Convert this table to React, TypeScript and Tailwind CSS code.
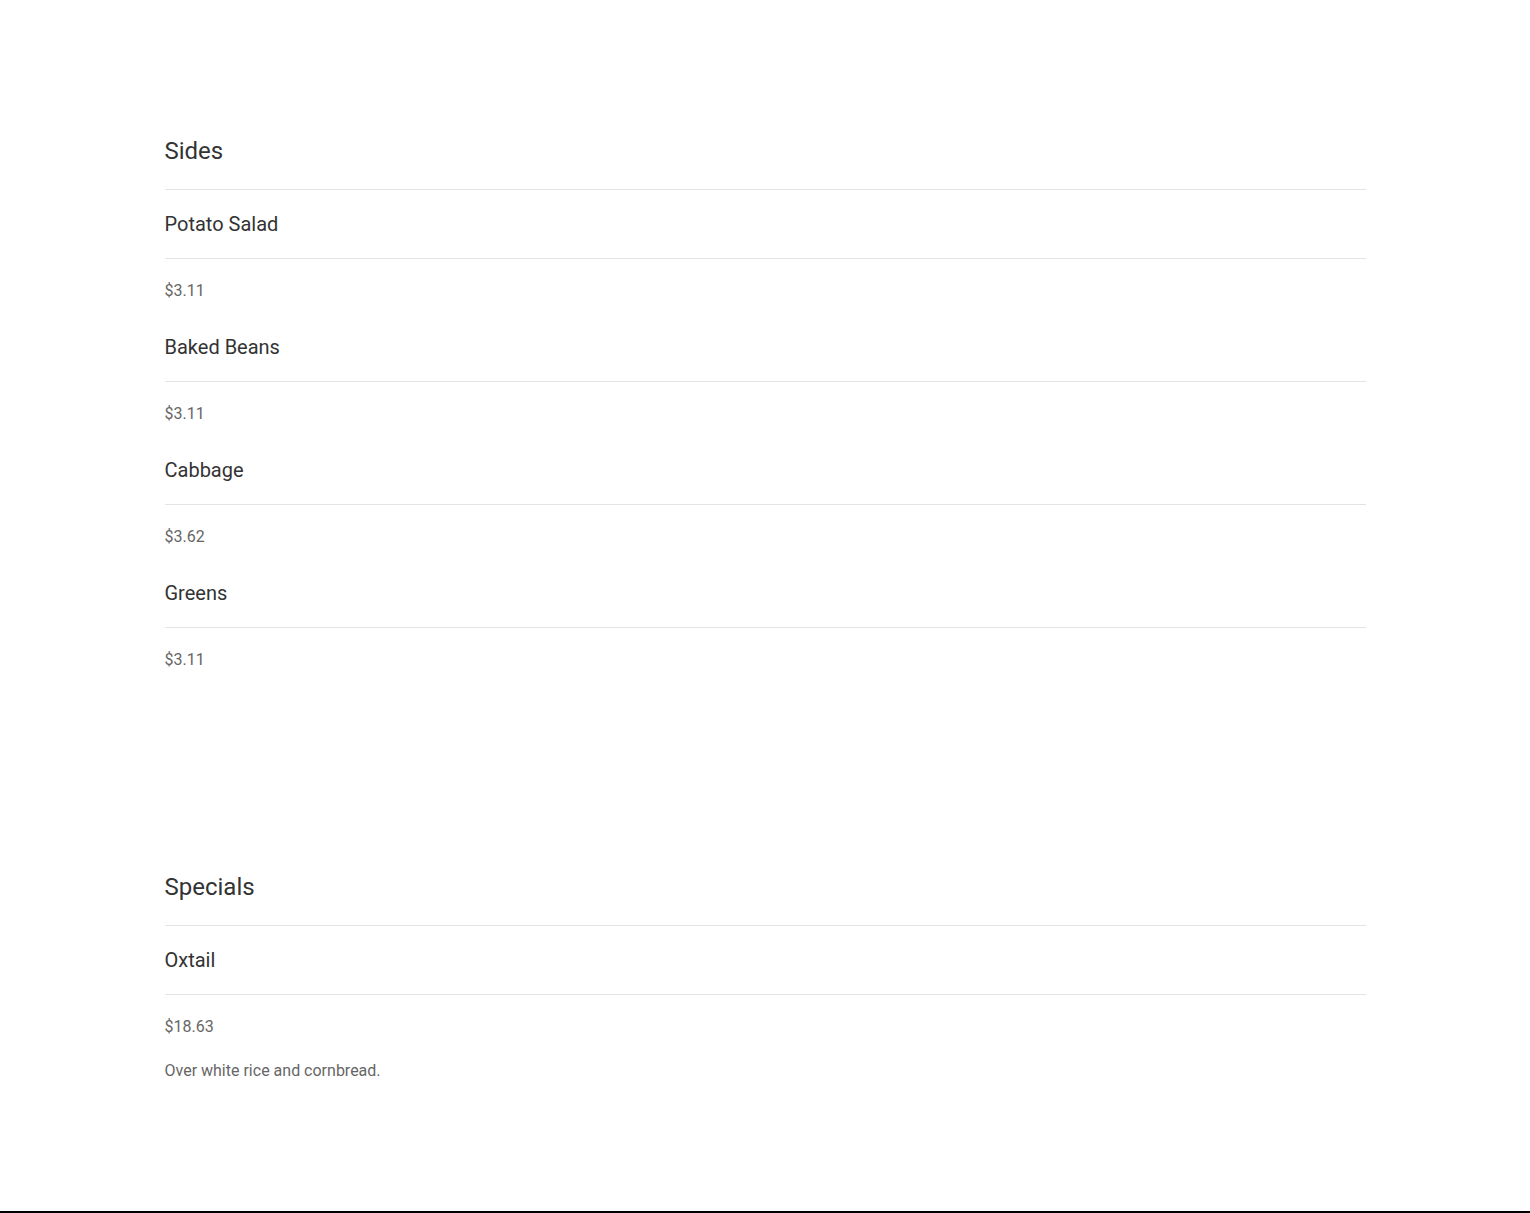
import React from 'react'

type Item = {
  name: string
  price: string
  description?: string
}

type Section = {
  title: string
  items: Item[]
}

const menu: Section[] = [
  {
    title: 'Sides',
    items: [
      { name: 'Potato Salad', price: '$3.11' },
      { name: 'Baked Beans', price: '$3.11' },
      { name: 'Cabbage', price: '$3.62' },
      { name: 'Greens', price: '$3.11' },
    ],
  },
  {
    title: 'Specials',
    items: [{ name: 'Oxtail', price: '$18.63', description: 'Over white rice and cornbread.' }],
  },
]

const MenuItem = ({ item }: { item: Item }) => {
  return (
    <div className="pb-[10px]">
      <h3 className="pt-5 pb-5 border-b border-[#e3e3e3] text-[20px] leading-[28px] text-[#333]">
        {item.name}
      </h3>
      <p className="mt-5 text-[16px] leading-6 text-[#666]">{item.price}</p>
      {item.description && (
        <p className="mt-5 text-[16px] leading-6 text-[#666]">{item.description}</p>
      )}
    </div>
  )
}

const App = () => {
  return (
    <div className="min-h-screen bg-white font-['Roboto',sans-serif]">
      <main className="mx-auto w-[1201px] pt-[135px] pb-[118px] flex flex-col gap-[189px]">
        {menu.map((section) => (
          <section key={section.title}>
            <h2 className="pb-[22px] border-b border-[#e3e3e3] text-[24px] leading-8 text-[#333]">
              {section.title}
            </h2>
            {section.items.map((item) => (
              <MenuItem key={item.name} item={item} />
            ))}
          </section>
        ))}
      </main>
      <footer className="border-t-2 border-black h-24" />
    </div>
  )
}

export default App
